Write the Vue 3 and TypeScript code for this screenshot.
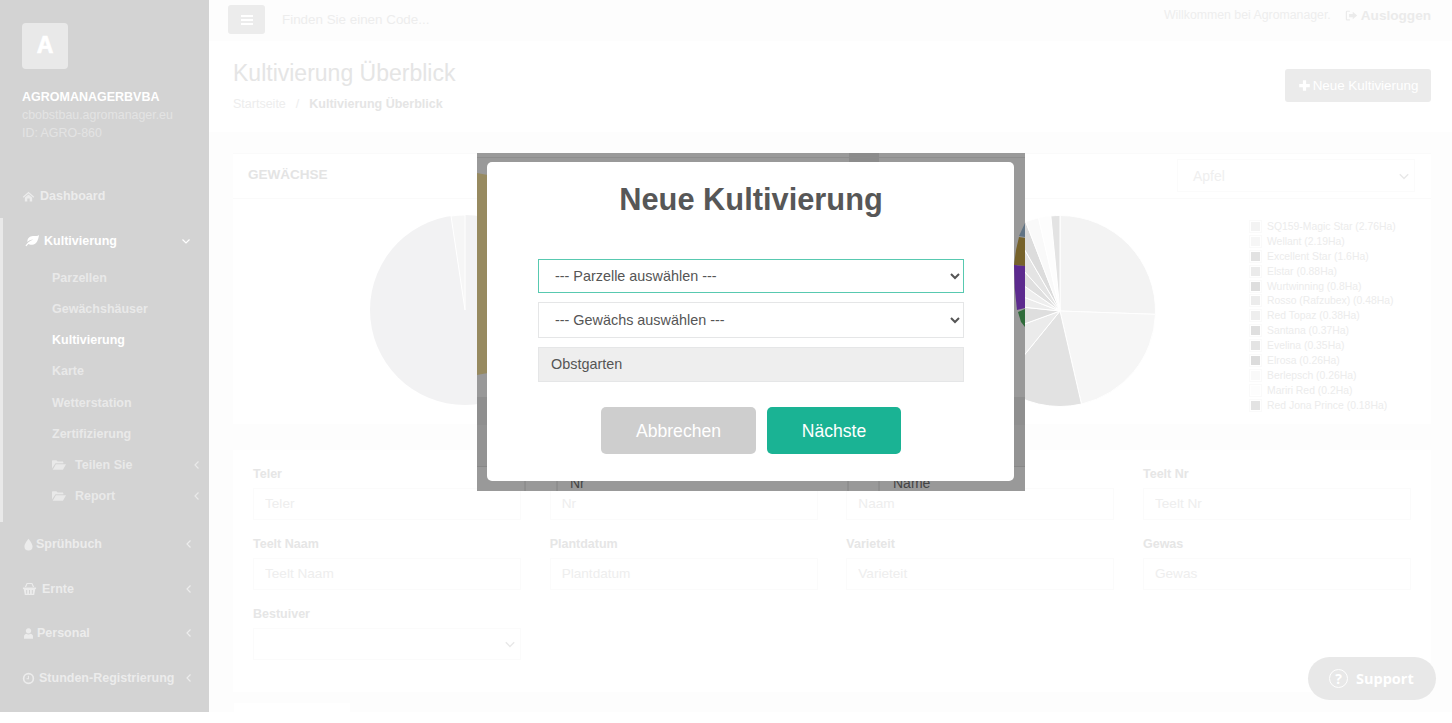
<script setup lang="ts">
const icons: Record<string, string> = {
  home: 'M8 2L15 8.2L14 9.4L8 4.2L2 9.4L1 8.2Z M3.5 9.2L8 5.4L12.5 9.2V14H9.5V10.5H6.5V14H3.5Z',
  leaf: 'M15 2C14 7 13 12 7.5 12.5C6 12.6 4.5 12.2 3.6 11.6C2.8 12.3 2 13.3 1.4 14.2L.5 13.6C2 11 4.5 8.5 9 7C6 7.3 4 8.2 2.6 9.6C2.3 6 5 3.5 8.5 3.3C11 3.2 13.5 3.4 15 2Z',
  folder: 'M0 3.5C0 3 .5 2.5 1 2.5H5L6.5 4H12C12.5 4 13 4.5 13 5V6H4L0 12Z M4.5 7H16L12.5 13.5H.8Z',
  tint: 'M8 1C8 1 13 7 13 10.5A5 5 0 0 1 3 10.5C3 7 8 1 8 1Z',
  basket: 'M1 7H15V8.5H14.2L13 15H3L1.8 8.5H1Z M4.5 9.5V13.5H5.5V9.5Z M7.5 9.5V13.5H8.5V9.5Z M10.5 9.5V13.5H11.5V9.5Z M3 6.5L5 2H11L13 6.5H11.6L10.2 3.3H5.8L4.4 6.5Z',
  user: 'M8 1.5a3.3 3.3 0 1 1-.01 0Z M2.5 14.5V11.5C2.5 9.3 4.5 8.3 5.5 8.3C6.2 8.9 7 9.2 8 9.2C9 9.2 9.8 8.9 10.5 8.3C11.5 8.3 13.5 9.3 13.5 11.5V14.5Z',
  clock: 'M8 1A7 7 0 1 0 8 15A7 7 0 1 0 8 1Z M8 3A5 5 0 1 1 8 13A5 5 0 1 1 8 3Z M7.2 4.5H8.6V8.8H5.5V7.6H7.2Z',
  signout: 'M6 2H2.5A1.5 1.5 0 0 0 1 3.5V12.5A1.5 1.5 0 0 0 2.5 14H6V12.5H2.5V3.5H6Z M9.5 3.5L15 8L9.5 12.5V10H5V6H9.5Z',
  plus: 'M6 1.5H10V6H14.5V10H10V14.5H6V10H1.5V6H6Z',
};

const subItems = ['Parzellen', 'Gewächshäuser', 'Kultivierung', 'Karte', 'Wetterstation', 'Zertifizierung'];
const lowerNav = [
  { label: 'Sprühbuch', icon: 'tint', size: 13, gap: 1 },
  { label: 'Ernte', icon: 'basket', size: 15, gap: 5 },
  { label: 'Personal', icon: 'user', size: 13, gap: 2 },
  { label: 'Stunden-Registrierung', icon: 'clock', size: 13, gap: 4 },
];

const fields = ['Teler', 'Nr', 'Naam', 'Teelt Nr', 'Teelt Naam', 'Plantdatum', 'Varieteit', 'Gewas'];

const slices = [
  { label: 'SQ159-Magic Star (2.76Ha)', end: 92, color: '#f3f3f3' },
  { label: 'Wellant (2.19Ha)', end: 167, color: '#f6f6f6' },
  { label: 'Excellent Star (1.6Ha)', end: 219, color: '#e2e2e2' },
  { label: 'Elstar (0.88Ha)', end: 250, color: '#ebebeb' },
  { label: 'Wurtwinning (0.8Ha)', end: 276, color: '#dedede' },
  { label: 'Rosso (Rafzubex) (0.48Ha)', end: 291, color: '#ececec' },
  { label: 'Red Topaz (0.38Ha)', end: 305, color: '#eeeeee' },
  { label: 'Santana (0.37Ha)', end: 318, color: '#dfdfdf' },
  { label: 'Evelina (0.35Ha)', end: 330, color: '#e4e4e4' },
  { label: 'Elrosa (0.26Ha)', end: 339, color: '#dcdcdc' },
  { label: 'Berlepsch (0.26Ha)', end: 347, color: '#f9f9f9' },
  { label: 'Mariri Red (0.2Ha)', end: 354.5, color: '#fdfdfd' },
  { label: 'Red Jona Prince (0.18Ha)', end: 360, color: '#e3e3e3' },
];

function polar(deg: number, r: number, cx: number, cy: number): string {
  const a = (deg * Math.PI) / 180;
  return `${(cx + r * Math.sin(a)).toFixed(2)} ${(cy - r * Math.cos(a)).toFixed(2)}`;
}

const wedges = slices.map((s, i) => {
  const start = i === 0 ? 0 : slices[i - 1].end;
  const large = s.end - start > 180 ? 1 : 0;
  return {
    color: s.color,
    d: `M97 97L${polar(start, 95.5, 97, 97)}A95.5 95.5 0 ${large} 1 ${polar(s.end, 95.5, 97, 97)}Z`,
  };
});
</script>

<template>
  <div class="page">
    <aside class="sidebar">
      <div class="profile">
        <div class="logo">A</div>
        <div class="org">AGROMANAGERBVBA</div>
        <div class="meta">cbobstbau.agromanager.eu</div>
        <div class="meta">ID: AGRO-860</div>
      </div>
      <nav>
        <div class="nav-row nav-dash">
          <svg class="ico dash-ico" viewBox="0 0 16 16"><path :d="icons.home" /></svg>
          <span>Dashboard</span>
        </div>
        <div class="active-group">
          <div class="nav-row active-head">
            <svg class="ico leaf-ico" viewBox="0 0 16 16"><path :d="icons.leaf" /></svg>
            <span class="grow">Kultivierung</span>
            <svg class="chev" viewBox="0 0 10 10"><path d="M1.5 3.5L5 7L8.5 3.5" /></svg>
          </div>
          <div class="sub">
            <div v-for="s in subItems" :key="s" class="sub-row" :class="{ current: s === 'Kultivierung' }">{{ s }}</div>
            <div class="sub-row">
              <svg class="ico folder-ico" viewBox="0 0 16 16"><path :d="icons.folder" /></svg>
              <span class="grow teilen">Teilen Sie</span>
              <svg class="chev" viewBox="0 0 10 10"><path d="M6.5 1.5L3 5L6.5 8.5" /></svg>
            </div>
            <div class="sub-row">
              <svg class="ico folder-ico" viewBox="0 0 16 16"><path :d="icons.folder" /></svg>
              <span class="grow report">Report</span>
              <svg class="chev" viewBox="0 0 10 10"><path d="M6.5 1.5L3 5L6.5 8.5" /></svg>
            </div>
          </div>
        </div>
        <div v-for="n in lowerNav" :key="n.label" class="nav-row lower">
          <svg class="ico" viewBox="0 0 16 16" :style="{ width: n.size + 'px', height: n.size + 'px', marginRight: n.gap + 'px' }"><path :d="icons[n.icon]" /></svg>
          <span class="grow">{{ n.label }}</span>
          <svg class="chev" viewBox="0 0 10 10"><path d="M6.5 1.5L3 5L6.5 8.5" /></svg>
        </div>
      </nav>
    </aside>

    <main class="main">
      <header class="topbar">
        <button class="burger" type="button" aria-label="Menü"><span></span><span></span><span></span></button>
        <span class="search">Finden Sie einen Code...</span>
        <span class="welcome">Willkommen bei Agromanager.</span>
        <span class="logout">
          <svg class="ico" viewBox="0 0 16 16"><path :d="icons.signout" /></svg>
          Ausloggen
        </span>
      </header>

      <section class="heading">
        <div>
          <h2>Kultivierung Überblick</h2>
          <div class="crumbs"><span>Startseite</span><i>/</i><b>Kultivierung Überblick</b></div>
        </div>
        <button class="new-btn" type="button">
          <svg class="ico" viewBox="0 0 16 16"><path :d="icons.plus" /></svg>
          Neue Kultivierung
        </button>
      </section>

      <section class="content">
        <div class="charts">
          <div class="card">
            <div class="card-head"><h5>GEWÄCHSE</h5></div>
            <div class="left-pie">
              <svg width="190" height="190" viewBox="0 0 190 190">
                <circle cx="95" cy="95" r="95" fill="#f2f2f3" />
                <path d="M95 95L81 1A95 95 0 0 1 95 0Z" fill="#f6f6f6" stroke="#fff" stroke-width="1" />
              </svg>
            </div>
          </div>
          <div class="card">
            <div class="card-head right-head">
              <div class="fake-select apfel">
                <span>Apfel</span>
                <svg class="chev" viewBox="0 0 10 10"><path d="M1.5 3.5L5 7L8.5 3.5" /></svg>
              </div>
            </div>
            <div class="right-body">
              <svg class="right-pie" width="194" height="194" viewBox="0 0 194 194">
                <path v-for="(w, i) in wedges" :key="i" :d="w.d" :fill="w.color" stroke="#fff" stroke-width="1" />
              </svg>
              <ul class="legend">
                <li v-for="s in slices" :key="s.label">
                  <span class="swatch"><i :style="{ background: s.color }"></i></span>{{ s.label }}
                </li>
              </ul>
            </div>
          </div>
        </div>

        <div class="filters">
          <div v-for="f in fields" :key="f" class="field">
            <label>{{ f }}</label>
            <input :placeholder="f" />
          </div>
          <div class="field">
            <label>Bestuiver</label>
            <div class="fake-select">
              <span></span>
              <svg class="chev" viewBox="0 0 10 10"><path d="M1.5 3.5L5 7L8.5 3.5" /></svg>
            </div>
          </div>
        </div>

        <div class="tab"></div>
      </section>
    </main>

    <div class="shade">
      <svg class="shade-bg" width="548" height="338" viewBox="0 0 548 338">
        <rect width="548" height="338" fill="#999" />
        <rect y="0" width="548" height="4" fill="#9a9a9a" />
        <rect y="4" width="548" height="1" fill="#8e8e8e" />
        <rect x="372" width="30" height="14" fill="#8c8c8c" />
        <path d="M0 20Q5 21 11 22V220Q5 221 0 222Z" fill="#978a60" />
        <rect y="244" width="548" height="28" fill="#8f8f8f" />
        <rect y="272" width="548" height="41" fill="#939393" />
        <rect y="313" width="548" height="1" fill="#888" />
        <path d="M48 314V338M80 314V338M371 314V338M402 314V338" stroke="#848484" />
        <path d="M542 83L548 70V84Z" fill="#607384" />
        <path d="M539 97L542 84L548 85V113L537 112Z" fill="#76622a" />
        <path d="M537 112L548 113V155L540 157Q537 135 537 112Z" fill="#5c2a8e" />
        <path d="M541 159L548 156V174L544 169Z" fill="#2f6b3a" />
        <text x="93" y="335" class="shade-text">Nr</text>
        <text x="416" y="335" class="shade-text">Name</text>
      </svg>
      <div class="dialog">
        <h2 class="dialog-title">Neue Kultivierung</h2>
        <select class="control focus">
          <option>--- Parzelle auswählen ---</option>
        </select>
        <select class="control second">
          <option>--- Gewächs auswählen ---</option>
        </select>
        <div class="control readonly">Obstgarten</div>
        <div class="actions">
          <button class="cancel" type="button">Abbrechen</button>
          <button class="confirm" type="button">Nächste</button>
        </div>
      </div>
    </div>

    <div class="support">
      <span class="q">?</span>
      <span>Support</span>
    </div>
  </div>
</template>

<style>
html, body { background: #fff; margin: 0; }
</style>

<style scoped>
* { box-sizing: border-box; }
.page {
  position: relative;
  display: flex;
  width: 1452px;
  height: 712px;
  overflow: hidden;
  font-family: "Liberation Sans", Arial, sans-serif;
  background: #fff;
}
.ico { fill: currentColor; flex: none; fill-rule: evenodd; }
.chev { width: 10px; height: 10px; fill: none; stroke: currentColor; stroke-width: 1.2; flex: none; }
.grow { flex: 1; }

/* sidebar */
.sidebar { width: 209px; flex: none; background: #d3d3d3; color: #ececec; font-size: 12.5px; font-weight: 700; }
.profile { height: 174px; padding: 23px 0 0 22px; }
.logo {
  width: 46px; height: 46px; border-radius: 4px; background: #e9e9e9; color: #fff;
  font-size: 23px; font-weight: 700; -webkit-text-stroke: 0.7px #fff;
  display: flex; align-items: center; justify-content: center; padding-bottom: 2px;
}
.org { margin-top: 19px; line-height: 18px; color: #fff; font-size: 12.5px; }
.meta { line-height: 18px; color: #e3e3e3; font-size: 12.4px; font-weight: 400; }
.nav-row { display: flex; align-items: center; height: 44.6px; padding: 0 15px 0 22px; }
.nav-dash { height: 44px; }
.dash-ico { width: 13px; height: 13px; margin-right: 5px; }
.active-group { border-left: 3px solid #e9e9e9; height: 304px; }
.active-head { height: 44px; color: #fff; padding: 1px 18px 0 22px; }
.leaf-ico { width: 15px; height: 15px; margin-right: 4px; }
.sub-row {
  display: flex; align-items: center; height: 31.25px; padding: 0 7px 0 49px; color: #e9e9e9;
}
.sub-row.current { color: #fff; }
.folder-ico { width: 14px; height: 14px; }
.teilen { padding-left: 9px; }
.report { padding-left: 9px; }

/* main */
.main { flex: 1; min-width: 0; display: flex; flex-direction: column; background: #fdfdfd; }
.topbar { height: 41px; flex: none; display: flex; align-items: flex-start; padding: 5px 21px 0 19px; background: #fdfdfd; color: #ededed; }
.burger {
  width: 37px; height: 29px; border: 0; border-radius: 3px; background: #ececec; padding: 0;
  display: flex; flex-direction: column; align-items: center; justify-content: center; gap: 2px;
}
.burger span { width: 12px; height: 2px; background: #fff; }
.search { margin-left: 17px; font-size: 13.4px; line-height: 29px; flex: 1; color: #ededed; }
.welcome { font-size: 12.3px; line-height: 21px; color: #eeeeee; margin-right: 14px; }
.logout { display: flex; align-items: center; gap: 3px; font-size: 13.6px; font-weight: 700; line-height: 21px; color: #ebebeb; }
.logout .ico { width: 13px; height: 13px; }
.heading { height: 91px; flex: none; background: #fff; display: flex; justify-content: space-between; padding: 16px 21px 0 24px; }
.heading h2 { margin: 0; font-size: 23px; font-weight: 400; line-height: 32px; color: #e5e5e5; }
.crumbs { margin-top: 6px; font-size: 12.5px; line-height: 18px; color: #ededed; }
.crumbs i { font-style: normal; margin: 0 10px; }
.crumbs b { color: #e5e5e5; }
.new-btn {
  margin-top: 12px; width: 146px; height: 33px; border: 0; border-radius: 3px; background: #ebebeb; color: #fff;
  font: 13.4px "Liberation Sans", Arial, sans-serif; display: flex; align-items: center; justify-content: center; gap: 2px; padding: 0;
}
.new-btn .ico { width: 13px; height: 13px; }
.content { flex: 1; padding: 21px 21px 0 24px; background: #fdfdfd; }
.charts { display: grid; grid-template-columns: 616px 552px; gap: 30px; height: 271px; }
.card { background: #fff; border-top: 1px solid #fafafa; }
.card-head { height: 45px; border-bottom: 1px solid #fafafa; padding: 0 15px; }
.card-head h5 { margin: 0; font-size: 13.5px; line-height: 41px; font-weight: 700; color: #e4e4e4; }
.left-pie { padding: 16px 0 0 137px; }
.right-head { padding: 5px 16px 0 298px; }
.fake-select {
  display: flex; align-items: center; justify-content: space-between; height: 32px; padding: 0 4px 0 15px;
  border: 1px solid #fbfbfb; font-size: 14px; color: #efefef;
}
.fake-select .chev { width: 12px; height: 12px; color: #e8e8e8; }
.apfel { height: 33px; }
.right-body { display: flex; align-items: flex-start; padding: 15px 0 0 84px; }
.right-pie { flex: none; }
.legend { list-style: none; margin: 5px 0 0 92px; padding: 0; font-size: 10.4px; color: #ececec; }
.legend li { display: flex; align-items: center; height: 14.9px; white-space: nowrap; }
.swatch { width: 13px; height: 13px; border: 1px solid #fafafa; margin-right: 5px; padding: 1px; display: block; }
.swatch i { display: block; width: 9px; height: 9px; }
.filters {
  margin-top: 26px; height: 242px; background: #fff; padding: 13px 20px 0;
  display: grid; grid-template-columns: repeat(4, 268px); column-gap: 28.67px; row-gap: 13px; align-content: start;
}
.field label { display: block; font-size: 12.5px; font-weight: 700; line-height: 20px; color: #e6e6e6; margin-bottom: 5px; padding-top: 1px; height: 20px; }
.field input {
  display: block; width: 100%; height: 32px; border: 1px solid #fbfbfb; padding: 0 11px 1px;
  font: 13.6px "Liberation Sans", Arial, sans-serif; background: #fff; outline: 0;
}
.field input::placeholder { color: #eeeeee; opacity: 1; }
.tab { margin: 11px 0 0 1px; width: 116px; height: 12px; background: #fff; }

/* dialog */
.shade { position: absolute; left: 477px; top: 153px; width: 548px; height: 338px; padding: 9px 11px 10px 10px; }
.shade-bg { position: absolute; left: 0; top: 0; }
.shade-text { font: 14px "Liberation Sans", Arial, sans-serif; fill: #444; }
.dialog {
  position: relative; height: 319px; background: #fff; border-radius: 5px; padding: 19px 50px 0 51px; color: #555;
}
.dialog-title { margin: 0 0 40px; font-size: 30.8px; font-weight: 700; line-height: 38px; text-align: center; color: #575757; }
.control {
  display: block; width: 100%; font: 14.4px "Liberation Sans", Arial, sans-serif; color: #555;
  border: 1px solid #e5e6e7; background: #fff; padding: 0 12px; border-radius: 0; outline: 0; height: 35px; margin-bottom: 9px;
}
.focus { height: 34px; border-color: #58c9b0; }
.second { height: 36px; }
.readonly { background: #eee; line-height: 33px; margin-bottom: 0; }
.actions { display: flex; justify-content: center; gap: 11px; margin-top: 25px; }
.actions button { height: 47px; border: 0; border-radius: 5px; color: #fff; font: 17.6px "Liberation Sans", Arial, sans-serif; padding: 2px 0 0; }
.cancel { width: 155px; background: #cecece; }
.confirm { width: 134px; background: #1ab394; }

/* support */
.support {
  position: absolute; left: 1308px; top: 657px; width: 128px; height: 43px; border-radius: 22px; background: #e8e8e8; color: #fff;
  display: flex; align-items: center; gap: 8px; padding-left: 21px; font: 700 14.5px "Open Sans", sans-serif;
}
.q { width: 19px; height: 19px; border: 1.5px solid #fff; border-radius: 50%; display: flex; align-items: center; justify-content: center; font-size: 14px; font-weight: 700; }
</style>
